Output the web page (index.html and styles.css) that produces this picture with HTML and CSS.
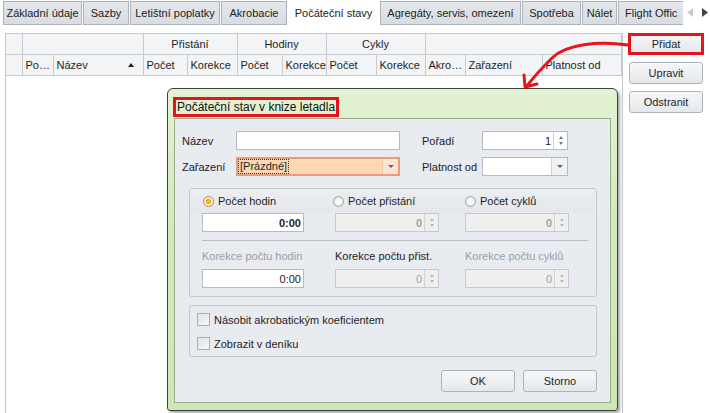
FILE: index.html
```html
<!DOCTYPE html>
<html lang="cs">
<head>
    <meta charset="UTF-8">
    <title>Počáteční stavy</title>
    <link rel="stylesheet" href="styles.css">
</head>
<body>
<div class="screen">
    <div class="tabbar">
        <div class="tabstrip">
            <div class="tab">Základní údaje</div>
            <div class="tab">Sazby</div>
            <div class="tab">Letištní poplatky</div>
            <div class="tab">Akrobacie</div>
            <div class="tab active">Počáteční stavy</div>
            <div class="tab">Agregáty, servis, omezení</div>
            <div class="tab">Spotřeba</div>
            <div class="tab">Nálet</div>
            <div class="tab last">Flight Offic</div>
        </div>
        <div class="tab-scroll">
            <svg width="6" height="9" viewBox="0 0 6 9"><path d="M6 0 L0 4.5 L6 9 Z" fill="#c9cdd2"/></svg>
            <svg width="6" height="9" viewBox="0 0 6 9"><path d="M0 0 L6 4.5 L0 9 Z" fill="#444"/></svg>
        </div>
    </div>

    <div class="page">
        <div class="grid">
            <table class="grid-head">
                <colgroup>
                    <col style="width:16px"><col style="width:31px"><col style="width:90px">
                    <col style="width:44px"><col style="width:50px"><col style="width:45px">
                    <col style="width:44px"><col style="width:50px"><col style="width:49px">
                    <col style="width:40px"><col style="width:77px"><col>
                </colgroup>
                <tr class="band">
                    <th></th>
                    <th colspan="2"></th>
                    <th colspan="2" class="center">Přistání</th>
                    <th colspan="2" class="center">Hodiny</th>
                    <th colspan="2" class="center">Cykly</th>
                    <th colspan="3"></th>
                </tr>
                <tr>
                    <th></th>
                    <th>Po…</th>
                    <th><span class="sort">Název <i class="sort-arrow"></i></span></th>
                    <th>Počet</th>
                    <th>Korekce</th>
                    <th>Počet</th>
                    <th>Korekce</th>
                    <th>Počet</th>
                    <th>Korekce</th>
                    <th>Akro…</th>
                    <th>Zařazení</th>
                    <th>Platnost od</th>
                </tr>
            </table>
        </div>
        <div class="side">
            <button class="btn marked">Přidat</button>
            <button class="btn">Upravit</button>
            <button class="btn">Odstranit</button>
        </div>
    </div>

    <div class="dialog">
        <div class="dialog-title"><span class="title-mark">Počáteční stav v knize letadla</span></div>
        <div class="dialog-body">
            <div class="form">
                <label class="lbl">Název</label>
                <div class="field wide"></div>
                <label class="lbl second">Pořadí</label>
                <div class="field narrow spin">
                    <span class="value">1</span>
                    <span class="spin-btns"><i class="up"></i><i class="down"></i></span>
                </div>

                <label class="lbl">Zařazení</label>
                <div class="field wide combo focused">
                    <span class="value focus">[Prázdné]</span>
                    <span class="drop"><i></i></span>
                </div>
                <label class="lbl second">Platnost od</label>
                <div class="field narrow combo">
                    <span class="value"></span>
                    <span class="drop"><i></i></span>
                </div>
            </div>

            <div class="group counts">
                <div class="radios">
                    <div class="radio checked"><span class="dot"></span>Počet hodin</div>
                    <div class="radio"><span class="dot"></span>Počet přistání</div>
                    <div class="radio"><span class="dot"></span>Počet cyklů</div>
                </div>
                <div class="cols">
                    <div class="field num bold">0:00</div>
                    <div class="field num bold disabled spin"><span class="value">0</span><span class="spin-btns"><i class="up"></i><i class="down"></i></span></div>
                    <div class="field num bold disabled spin"><span class="value">0</span><span class="spin-btns"><i class="up"></i><i class="down"></i></span></div>
                </div>
                <hr class="sep">
                <div class="cols labels">
                    <span class="muted">Korekce počtu hodin</span>
                    <span>Korekce počtu přist.</span>
                    <span class="muted">Korekce počtu cyklů</span>
                </div>
                <div class="cols">
                    <div class="field num">0:00</div>
                    <div class="field num disabled spin"><span class="value">0</span><span class="spin-btns"><i class="up"></i><i class="down"></i></span></div>
                    <div class="field num disabled spin"><span class="value">0</span><span class="spin-btns"><i class="up"></i><i class="down"></i></span></div>
                </div>
            </div>

            <div class="group checks">
                <div class="check"><span class="box"></span>Násobit akrobatickým koeficientem</div>
                <div class="check"><span class="box"></span>Zobrazit v deníku</div>
            </div>

            <div class="actions">
                <button class="btn">OK</button>
                <button class="btn">Storno</button>
            </div>
        </div>
    </div>

    <svg class="pointer" width="710" height="413" viewBox="0 0 710 413">
        <path d="M628 45 C 598 41, 566 44, 552 58 C 541 69, 533 78, 526 87" fill="none" stroke="#e8151c" stroke-width="3" stroke-linecap="round"/>
        <path d="M524 75 L 525 87 L 537 84" fill="none" stroke="#e8151c" stroke-width="3" stroke-linecap="round" stroke-linejoin="round"/>
    </svg>
</div>
</body>
</html>
```

FILE: styles.css
```css
body {
    margin: 0;
    font-family: 'Liberation Sans', Arial, sans-serif;
    font-size: 11px;
    color: #1e1e1e;
    background: #fff;
}
.screen {
    position: relative;
    width: 710px;
    height: 413px;
    overflow: hidden;
}

/* tabs */
.tabbar {
    display: flex;
    height: 26px;
    padding-top: 1px;
    box-sizing: border-box;
}
.tabstrip {
    display: flex;
    width: 680px;
    overflow: hidden;
    padding-left: 3px;
    gap: 1px;
}
.tab {
    flex: none;
    box-sizing: border-box;
    height: 24px;
    line-height: 23px;
    padding: 0;
    text-align: center;
    border: 1px solid #aab1b9;
    background: linear-gradient(#e4e7eb, #d9dde2);
    color: #222;
    white-space: nowrap;
}
.tab:nth-child(1) { width: 79px; }
.tab:nth-child(2) { width: 46px; }
.tab:nth-child(3) { width: 90px; }
.tab:nth-child(4) { width: 66px; }
.tab:nth-child(5) { width: 91px; }
.tab:nth-child(6) { width: 141px; }
.tab:nth-child(7) { width: 59px; }
.tab:nth-child(8) { width: 35px; }
.tab.last {
    width: 70px;
    text-align: left;
    padding-left: 6px;
}
.tab.active {
    background: #fff;
    border-color: #fff;
    height: 25px;
}
.tab-scroll {
    flex: 1;
    display: flex;
    justify-content: space-between;
    align-items: center;
    padding: 0 2px 2px 4px;
}

/* grid */
.page {
    display: flex;
    margin-top: 7px;
    height: 380px;
}
.grid {
    width: 618px;
    margin-left: 5px;
    box-sizing: border-box;
    border-left: 1px solid #c3c8cf;
    border-right: 1px solid #c3c8cf;
}
.grid-head {
    width: 100%;
    table-layout: fixed;
    border-collapse: collapse;
}
.grid-head th {
    height: 20px;
    padding: 0 3px;
    background: #f3f4f6;
    border: 1px solid #c6cbd2;
    border-left: 0;
    font-weight: normal;
    text-align: left;
    white-space: nowrap;
    overflow: hidden;
}
.grid-head th.center {
    text-align: center;
}
.sort {
    display: flex;
    justify-content: space-between;
    align-items: center;
    padding-right: 6px;
}
.sort-arrow {
    width: 0;
    height: 0;
    border-left: 3px solid transparent;
    border-right: 3px solid transparent;
    border-bottom: 4px solid #222;
}

.side {
    display: flex;
    flex-direction: column;
    gap: 7px;
    margin-left: 5px;
    width: 76px;
}
.btn {
    font: inherit;
    color: #1e1e1e;
    height: 22px;
    padding: 0;
    border: 1px solid #adb3ba;
    border-radius: 3px;
    background: linear-gradient(#f7f8f9, #e4e7eb);
}
.side .btn {
    margin: 0 1px;
}
.side .btn.marked {
    margin: 0;
    border: 3px solid #e5141c;
    border-radius: 0;
    background: linear-gradient(#f4f5f7, #e6e8ec);
}

/* dialog */
.dialog {
    position: absolute;
    left: 167px;
    top: 88px;
    width: 451px;
    height: 323px;
    box-sizing: border-box;
    border: 1px solid #3b4339;
    border-radius: 6px 6px 3px 3px;
    background: linear-gradient(#e3f2d3, #d3e9be 40%, #cfe6b8);
    box-shadow: 2px 2px 3px rgba(0, 0, 0, 0.35);
}
.dialog-title {
    height: 29px;
    padding: 8px 0 0 5px;
    box-sizing: border-box;
}
.title-mark {
    display: inline-block;
    font-size: 12px;
    line-height: 13px;
    padding: 1px 1px 0 1px;
    border: 3px solid #e5141c;
    color: #111;
}
.dialog-body {
    margin: 0 6px;
    height: 285px;
    box-sizing: border-box;
    border: 1px solid #98ad88;
    background: #e8ebf0;
    padding: 12px 13px 0 14px;
}
.form {
    display: grid;
    grid-template-columns: 54px 186px 60px 86px;
    row-gap: 7px;
    align-items: center;
    margin-left: -7px;
}
.lbl {
    color: #222;
}
.field {
    position: relative;
    height: 19px;
    box-sizing: border-box;
    border: 1px solid #b4bac2;
    background: #fff;
    display: flex;
    align-items: center;
}
.field.wide {
    width: 164px;
}
.field.narrow {
    width: 86px;
}
.field .value {
    flex: 1;
    padding: 0 2px;
    text-align: right;
}
.combo .value {
    text-align: left;
}
.combo.focused {
    border: 2px solid #ec9a7d;
    background: #fdd8b4;
}
.combo .value.focus {
    flex: none;
    margin-left: 1px;
    padding: 0 1px;
    outline: 1px dotted #333;
    line-height: 13px;
    margin-right: auto;
}
.drop {
    width: 15px;
    height: 100%;
    border-left: 1px solid #cfd3d8;
    background: #f1f2f4;
    display: flex;
    align-items: center;
    justify-content: center;
}
.combo.focused .drop {
    background: #fbe5d2;
    border-left-color: #f0c5ad;
}
.drop i {
    width: 0;
    height: 0;
    border-left: 3px solid transparent;
    border-right: 3px solid transparent;
    border-top: 3px solid #666;
}
.spin-btns {
    width: 13px;
    height: 100%;
    border-left: 1px solid #d0d4d9;
    display: flex;
    flex-direction: column;
    align-items: center;
    justify-content: center;
    gap: 3px;
}
.spin-btns i {
    width: 0;
    height: 0;
    border-left: 2px solid transparent;
    border-right: 2px solid transparent;
}
.spin-btns .up {
    border-bottom: 3px solid #777;
}
.spin-btns .down {
    border-top: 3px solid #777;
}

/* groups */
.group {
    border: 1px solid #c3c8cf;
    border-radius: 3px;
    box-sizing: border-box;
}
.counts {
    margin-top: 12px;
    height: 109px;
    overflow: hidden;
}
.radios {
    display: grid;
    grid-template-columns: 130px 132px 1fr;
    height: 24px;
    align-items: center;
    padding-left: 13px;
    background: linear-gradient(#eceef1, #e4e7eb);
}
.radio {
    display: flex;
    align-items: center;
    gap: 4px;
}
.dot {
    width: 9px;
    height: 9px;
    border-radius: 50%;
    border: 1px solid #9ea4ab;
    background: radial-gradient(circle, #fafafa 30%, #d9dcdf 100%);
    flex: none;
}
.radio.checked .dot {
    border-color: #b09257;
    background: radial-gradient(circle, #ffc72b 0, #f0a500 35%, #f6f2e6 45%, #dcdfe3 100%);
}
.cols {
    display: grid;
    grid-template-columns: 133px 130px 1fr;
    padding-left: 12px;
}
.cols .field {
    width: 102px;
}
.cols .field + .field {
    width: 104px;
}
.field.num {
    justify-content: flex-end;
    padding-right: 2px;
}
.field.spin {
    padding-right: 0;
}
.field.bold {
    font-weight: bold;
}
.field.disabled {
    background: #efefef;
    border-color: #c9c9c9;
    color: #a3a3a3;
}
.field.disabled .spin-btns i {
    border-top-color: #bbb;
    border-bottom-color: #bbb;
}
.sep {
    margin: 8px 8px 0 12px;
    border: 0;
    border-top: 1px solid #b8bdc4;
}
.labels {
    height: 26px;
    align-items: center;
    padding-top: 2px;
}
.muted {
    color: #9aa0a6;
}
.checks {
    margin-top: 8px;
    height: 52px;
    padding: 7px 0 0 7px;
}
.check {
    display: flex;
    align-items: center;
    gap: 4px;
    height: 13px;
    margin-bottom: 11px;
}
.box {
    width: 11px;
    height: 11px;
    border: 1px solid #a9aeb4;
    background: linear-gradient(135deg, #dfe2e5, #f6f7f8);
}
.actions {
    display: flex;
    justify-content: flex-end;
    gap: 8px;
    margin-top: 13px;
}
.actions .btn {
    width: 74px;
}

.pointer {
    position: absolute;
    left: 0;
    top: 0;
    pointer-events: none;
}
```
